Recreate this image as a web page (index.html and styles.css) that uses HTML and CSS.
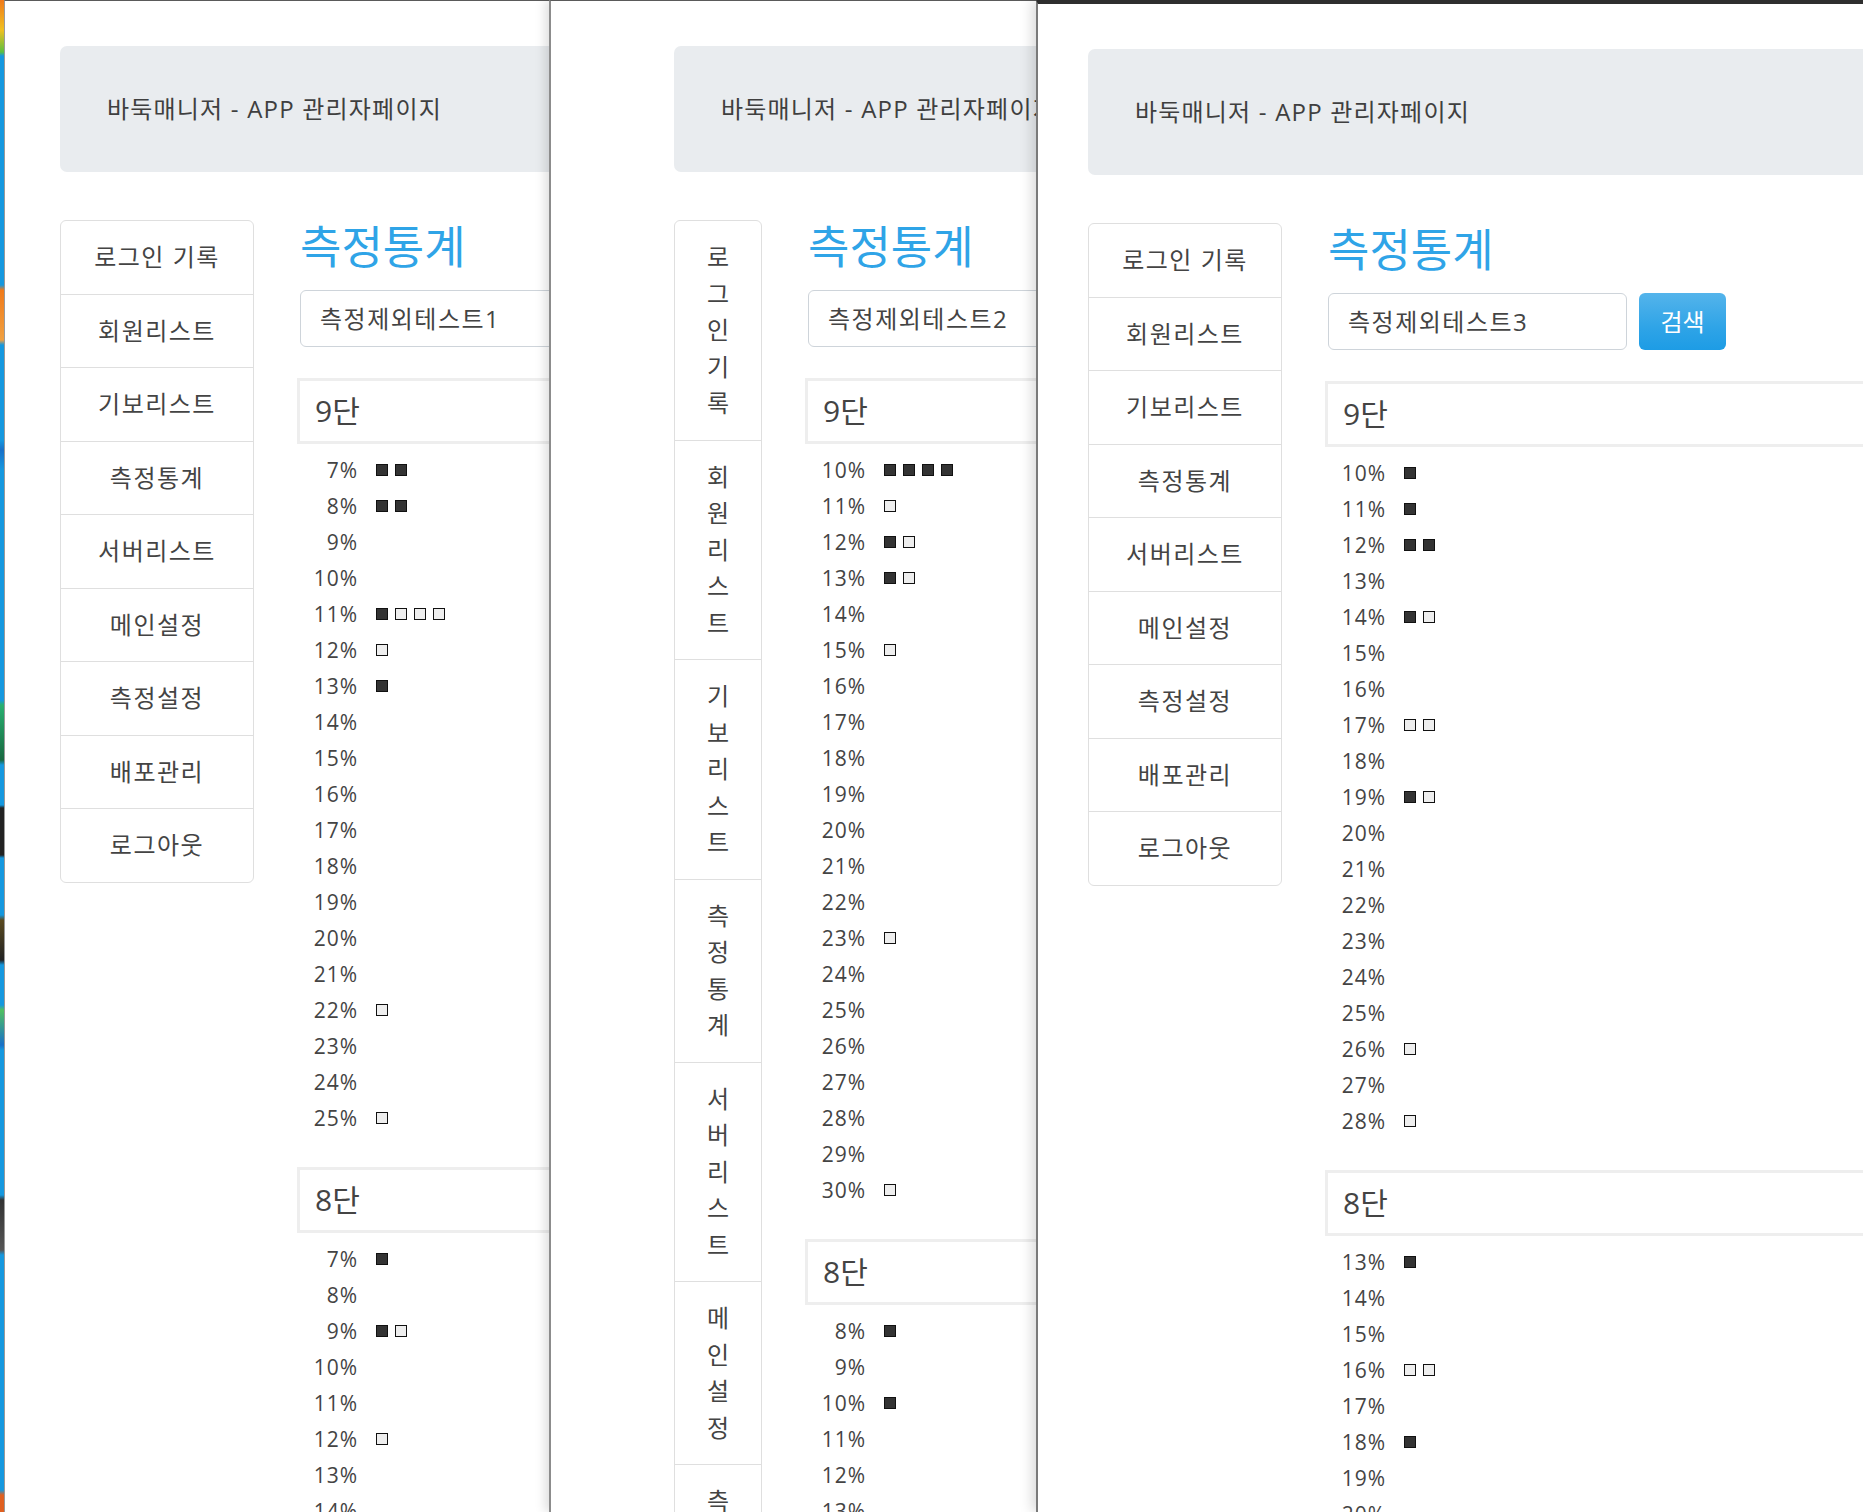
FILE: index.html
```html
<!DOCTYPE html>
<html lang="ko">
<head>
<meta charset="utf-8">
<title>측정통계</title>
<link rel="stylesheet" href="styles.css">
</head>
<body>
<div class="desk"></div>

<div class="win w1">
  <div class="page">
    <div class="jumbo">바둑매니저 - APP 관리자페이지</div>
    <div class="layout">
      <ul class="side">
        <li>로그인 기록</li><li>회원리스트</li><li>기보리스트</li><li>측정통계</li><li>서버리스트</li><li>메인설정</li><li>측정설정</li><li>배포관리</li><li>로그아웃</li>
      </ul>
      <div class="main">
        <h2 class="title">측정통계</h2>
        <div class="search"><div class="input">측정제외테스트1</div><div class="btn">검색</div></div>
        <div class="panel">9단</div>
        <div class="rows">
          <div class="r"><span class="p">7%</span><i class="sq d"></i><i class="sq d"></i></div>
          <div class="r"><span class="p">8%</span><i class="sq d"></i><i class="sq d"></i></div>
          <div class="r"><span class="p">9%</span></div>
          <div class="r"><span class="p">10%</span></div>
          <div class="r"><span class="p">11%</span><i class="sq d"></i><i class="sq l"></i><i class="sq l"></i><i class="sq l"></i></div>
          <div class="r"><span class="p">12%</span><i class="sq l"></i></div>
          <div class="r"><span class="p">13%</span><i class="sq d"></i></div>
          <div class="r"><span class="p">14%</span></div>
          <div class="r"><span class="p">15%</span></div>
          <div class="r"><span class="p">16%</span></div>
          <div class="r"><span class="p">17%</span></div>
          <div class="r"><span class="p">18%</span></div>
          <div class="r"><span class="p">19%</span></div>
          <div class="r"><span class="p">20%</span></div>
          <div class="r"><span class="p">21%</span></div>
          <div class="r"><span class="p">22%</span><i class="sq l"></i></div>
          <div class="r"><span class="p">23%</span></div>
          <div class="r"><span class="p">24%</span></div>
          <div class="r"><span class="p">25%</span><i class="sq l"></i></div>
        </div>
        <div class="panel">8단</div>
        <div class="rows">
          <div class="r"><span class="p">7%</span><i class="sq d"></i></div>
          <div class="r"><span class="p">8%</span></div>
          <div class="r"><span class="p">9%</span><i class="sq d"></i><i class="sq l"></i></div>
          <div class="r"><span class="p">10%</span></div>
          <div class="r"><span class="p">11%</span></div>
          <div class="r"><span class="p">12%</span><i class="sq l"></i></div>
          <div class="r"><span class="p">13%</span></div>
          <div class="r"><span class="p">14%</span></div>
        </div>
      </div>
    </div>
  </div>
</div>

<div class="win w2">
  <div class="page">
    <div class="jumbo">바둑매니저 - APP 관리자페이지</div>
    <div class="layout">
      <ul class="side narrow">
        <li>로그인 기록</li><li>회원리스트</li><li>기보리스트</li><li>측정통계</li><li>서버리스트</li><li>메인설정</li><li>측정설정</li>
      </ul>
      <div class="main">
        <h2 class="title">측정통계</h2>
        <div class="search"><div class="input">측정제외테스트2</div><div class="btn">검색</div></div>
        <div class="panel">9단</div>
        <div class="rows">
          <div class="r"><span class="p">10%</span><i class="sq d"></i><i class="sq d"></i><i class="sq d"></i><i class="sq d"></i></div>
          <div class="r"><span class="p">11%</span><i class="sq l"></i></div>
          <div class="r"><span class="p">12%</span><i class="sq d"></i><i class="sq l"></i></div>
          <div class="r"><span class="p">13%</span><i class="sq d"></i><i class="sq l"></i></div>
          <div class="r"><span class="p">14%</span></div>
          <div class="r"><span class="p">15%</span><i class="sq l"></i></div>
          <div class="r"><span class="p">16%</span></div>
          <div class="r"><span class="p">17%</span></div>
          <div class="r"><span class="p">18%</span></div>
          <div class="r"><span class="p">19%</span></div>
          <div class="r"><span class="p">20%</span></div>
          <div class="r"><span class="p">21%</span></div>
          <div class="r"><span class="p">22%</span></div>
          <div class="r"><span class="p">23%</span><i class="sq l"></i></div>
          <div class="r"><span class="p">24%</span></div>
          <div class="r"><span class="p">25%</span></div>
          <div class="r"><span class="p">26%</span></div>
          <div class="r"><span class="p">27%</span></div>
          <div class="r"><span class="p">28%</span></div>
          <div class="r"><span class="p">29%</span></div>
          <div class="r"><span class="p">30%</span><i class="sq l"></i></div>
        </div>
        <div class="panel">8단</div>
        <div class="rows">
          <div class="r"><span class="p">8%</span><i class="sq d"></i></div>
          <div class="r"><span class="p">9%</span></div>
          <div class="r"><span class="p">10%</span><i class="sq d"></i></div>
          <div class="r"><span class="p">11%</span></div>
          <div class="r"><span class="p">12%</span></div>
          <div class="r"><span class="p">13%</span></div>
        </div>
      </div>
    </div>
  </div>
</div>

<div class="win w3">
  <div class="page">
    <div class="jumbo">바둑매니저 - APP 관리자페이지</div>
    <div class="layout">
      <ul class="side">
        <li>로그인 기록</li><li>회원리스트</li><li>기보리스트</li><li>측정통계</li><li>서버리스트</li><li>메인설정</li><li>측정설정</li><li>배포관리</li><li>로그아웃</li>
      </ul>
      <div class="main">
        <h2 class="title">측정통계</h2>
        <div class="search"><div class="input">측정제외테스트3</div><div class="btn">검색</div></div>
        <div class="panel">9단</div>
        <div class="rows">
          <div class="r"><span class="p">10%</span><i class="sq d"></i></div>
          <div class="r"><span class="p">11%</span><i class="sq d"></i></div>
          <div class="r"><span class="p">12%</span><i class="sq d"></i><i class="sq d"></i></div>
          <div class="r"><span class="p">13%</span></div>
          <div class="r"><span class="p">14%</span><i class="sq d"></i><i class="sq l"></i></div>
          <div class="r"><span class="p">15%</span></div>
          <div class="r"><span class="p">16%</span></div>
          <div class="r"><span class="p">17%</span><i class="sq l"></i><i class="sq l"></i></div>
          <div class="r"><span class="p">18%</span></div>
          <div class="r"><span class="p">19%</span><i class="sq d"></i><i class="sq l"></i></div>
          <div class="r"><span class="p">20%</span></div>
          <div class="r"><span class="p">21%</span></div>
          <div class="r"><span class="p">22%</span></div>
          <div class="r"><span class="p">23%</span></div>
          <div class="r"><span class="p">24%</span></div>
          <div class="r"><span class="p">25%</span></div>
          <div class="r"><span class="p">26%</span><i class="sq l"></i></div>
          <div class="r"><span class="p">27%</span></div>
          <div class="r"><span class="p">28%</span><i class="sq l"></i></div>
        </div>
        <div class="panel">8단</div>
        <div class="rows">
          <div class="r"><span class="p">13%</span><i class="sq d"></i></div>
          <div class="r"><span class="p">14%</span></div>
          <div class="r"><span class="p">15%</span></div>
          <div class="r"><span class="p">16%</span><i class="sq l"></i><i class="sq l"></i></div>
          <div class="r"><span class="p">17%</span></div>
          <div class="r"><span class="p">18%</span><i class="sq d"></i></div>
          <div class="r"><span class="p">19%</span></div>
          <div class="r"><span class="p">20%</span></div>
        </div>
      </div>
    </div>
  </div>
</div>
</body>
</html>
```
FILE: styles.css
```css
html, body {
  margin: 0;
  padding: 0;
  width: 1863px;
  height: 1512px;
  overflow: hidden;
  background: #ffffff;
}
body {
  position: relative;
  font-family: "Open Sans", "Noto Sans CJK KR", sans-serif;
  color: #495057;
}
.desk {
  position: absolute;
  left: 0;
  top: 0;
  width: 5px;
  height: 1512px;
  background: linear-gradient(to bottom,
    #f07a1a 0, #f0c020 30px, #5cc040 52px, #1598df 56px,
    #1598df 285px, #f07a1a 290px, #f0a040 340px, #1598df 345px,
    #1598df 440px, #1870c8 450px, #1598df 470px,
    #1598df 700px, #28b070 705px, #186840 760px, #1598df 765px,
    #1598df 805px, #222 808px, #222 855px, #1598df 858px,
    #1598df 915px, #5a4a20 920px, #222 960px, #1598df 965px,
    #1598df 1005px, #50c060 1010px, #1870c8 1045px, #1598df 1050px,
    #1598df 1195px, #333 1200px, #555 1250px, #1598df 1255px,
    #1598df 1490px, #e06020 1495px, #e06020 1512px);
}
.win {
  position: absolute;
  top: 0;
  height: 1512px;
  overflow: hidden;
  background: #ffffff;
  box-sizing: border-box;
}
.w1 {
  left: 4px;
  width: 1100px;
  border-top: 1px solid #5a5a5a;
  border-left: 1px solid #9a9a9a;
  z-index: 1;
}
.w2 {
  left: 549px;
  width: 1100px;
  border-top: 1px solid #5a5a5a;
  border-left: 2px solid #8c8c8c;
  z-index: 2;
  box-shadow: -4px 0 10px rgba(0, 0, 0, 0.13);
}
.w3 {
  left: 1036px;
  width: 860px;
  border-top: 4px solid #2e2e2e;
  border-left: 2px solid #7a7a7a;
  z-index: 3;
  box-shadow: -4px 0 12px rgba(0, 0, 0, 0.15);
}
.page {
  width: 1040px;
  padding-top: 45px;
}
.w1 .page { margin-left: 55px; }
.w2 .page { margin-left: 123px; width: 900px; }
.w3 .page { margin-left: 50px; width: 820px; }
.jumbo {
  background: #e9ecef;
  border-radius: 7px;
  padding: 45px 47px;
  font-size: 24px;
  line-height: 36px;
  letter-spacing: 1.2px;
  color: #3f3f3f;
  white-space: nowrap;
}
.layout {
  display: flex;
  align-items: flex-start;
  gap: 43px;
  margin-top: 48px;
}
.side {
  list-style: none;
  margin: 0;
  padding: 0;
  width: 194px;
  flex: none;
}
.side.narrow { width: 88px; }
.side li {
  border: 1px solid #dfdfdf;
  margin-bottom: -1px;
  padding: 18px 28px;
  line-height: 36.5px;
  font-size: 24px;
  letter-spacing: 1.5px;
  text-align: center;
  color: #444;
}
.side.narrow li { letter-spacing: 0; padding: 18px 29px; }
.side li:first-child { border-radius: 6px 6px 0 0; }
.side li:last-child { border-radius: 0 0 6px 6px; margin-bottom: 0; }
.main {
  flex: 1;
  min-width: 0;
  padding-left: 3px;
}
.title {
  margin: 0 0 16px;
  font-size: 45px;
  line-height: 54px;
  font-weight: 400;
  color: #2fa4e7;
}
.search {
  display: flex;
  gap: 12px;
}
.input {
  height: 55px;
  border: 1px solid #ced4da;
  border-radius: 6px;
  padding: 0 19px;
  box-sizing: content-box;
  width: 259px;
  font-size: 24px;
  line-height: 55px;
  letter-spacing: 1.5px;
  color: #444;
  white-space: nowrap;
  overflow: hidden;
}
.btn {
  width: 87px;
  height: 57px;
  border-radius: 6px;
  background: linear-gradient(to bottom, #54b4eb 0%, #2fa4e7 60%, #1d9ce5 100%);
  color: #ffffff;
  font-size: 24px;
  line-height: 57px;
  text-align: center;
}
.panel {
  margin: 31px 0 8px -3px;
  border: 3px solid #eeeeee;
  padding: 11px 15px;
  font-size: 30px;
  line-height: 38px;
  color: #444;
}
.rows {
  margin-left: -3px;
  margin-bottom: 29px;
}
.r {
  display: flex;
  align-items: center;
  height: 36px;
}
.p {
  width: 61px;
  flex: none;
  text-align: right;
  font-size: 21px;
  letter-spacing: 1px;
  color: #444;
  margin-right: 18px;
}
.sq {
  display: block;
  width: 10px;
  height: 10px;
  border: 1px solid #111;
  margin-right: 7px;
}
.sq.d { background: #333333; }
.sq.l { background: #eeeeee; }
```
